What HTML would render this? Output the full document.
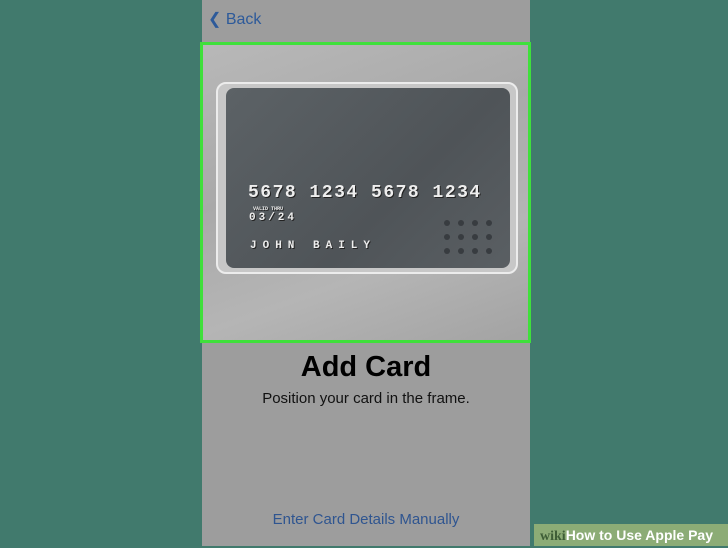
<!DOCTYPE html>
<html><head><style>
body{margin:0;width:728px;height:546px;background:#417a6d;position:relative;overflow:hidden;font-family:"Liberation Sans",sans-serif}
.ph{position:absolute;left:202px;top:0;width:328px;height:546px;background:#9d9d9d}
.back{position:absolute;left:208px;top:9px;color:#2d5a9a;font-size:16px}
.frame{position:absolute;left:200px;top:42px;width:325px;height:295px;border:3px solid #3fe03b;background:linear-gradient(160deg,#b8b8b8,#a9a9a9 40%,#b5b5b5 70%,#a3a3a3)}
.outer{position:absolute;left:216px;top:82px;width:298px;height:188px;border:2px solid #ececec;border-radius:10px;background:#c7c7c7}
.card{position:absolute;left:226px;top:88px;width:284px;height:180px;border-radius:8px;background:linear-gradient(135deg,#5c6266,#4f5458 60%,#5a5f63);overflow:hidden}
.num{position:absolute;color:#eee;font-family:"Liberation Mono",monospace;font-weight:bold;text-shadow:1px 1px 0 #222}
.dots{position:absolute;left:444px;top:220px;display:grid;grid-template-columns:repeat(4,6px);gap:8px 8px}
.dots i{width:6px;height:6px;border-radius:50%;background:#383c40;display:block}
h1{position:absolute;left:202px;width:328px;top:351px;margin:0;text-align:center;font-size:29px;font-weight:bold;color:#000}
.sub{position:absolute;left:202px;width:328px;top:390px;text-align:center;font-size:15px;color:#111}
.man{position:absolute;left:202px;width:328px;top:511px;text-align:center;font-size:15px;color:#2f5590}
.wm{position:absolute;left:534px;top:524px;width:196px;height:22px;background:#8cac76;color:#fff;font-size:14px;font-weight:bold;line-height:22px;padding-left:6px;box-sizing:border-box}
</style></head><body>
<div class="ph"></div>
<div class="back">&#10094; Back</div>
<div class="frame"></div>
<div class="outer"></div>
<div class="card"></div>
<div class="num" style="left:248px;top:183px;font-size:18px;letter-spacing:1.5px">5678 1234 5678 1234</div>
<div class="num" style="left:253px;top:206px;font-size:5px">VALID THRU</div>
<div class="num" style="left:249px;top:212px;font-size:11px;letter-spacing:3px">03/24</div>
<div class="num" style="left:250px;top:240px;font-size:11px;letter-spacing:6px">JOHN BAILY</div>
<div class="dots"><i></i><i></i><i></i><i></i><i></i><i></i><i></i><i></i><i></i><i></i><i></i><i></i></div>
<h1>Add Card</h1>
<div class="sub">Position your card in the frame.</div>
<div class="man">Enter Card Details Manually</div>
<div class="wm"><span style="font-family:'Liberation Serif',serif;color:#3d5d36">wiki</span>How to Use Apple Pay</div>
</body></html>
